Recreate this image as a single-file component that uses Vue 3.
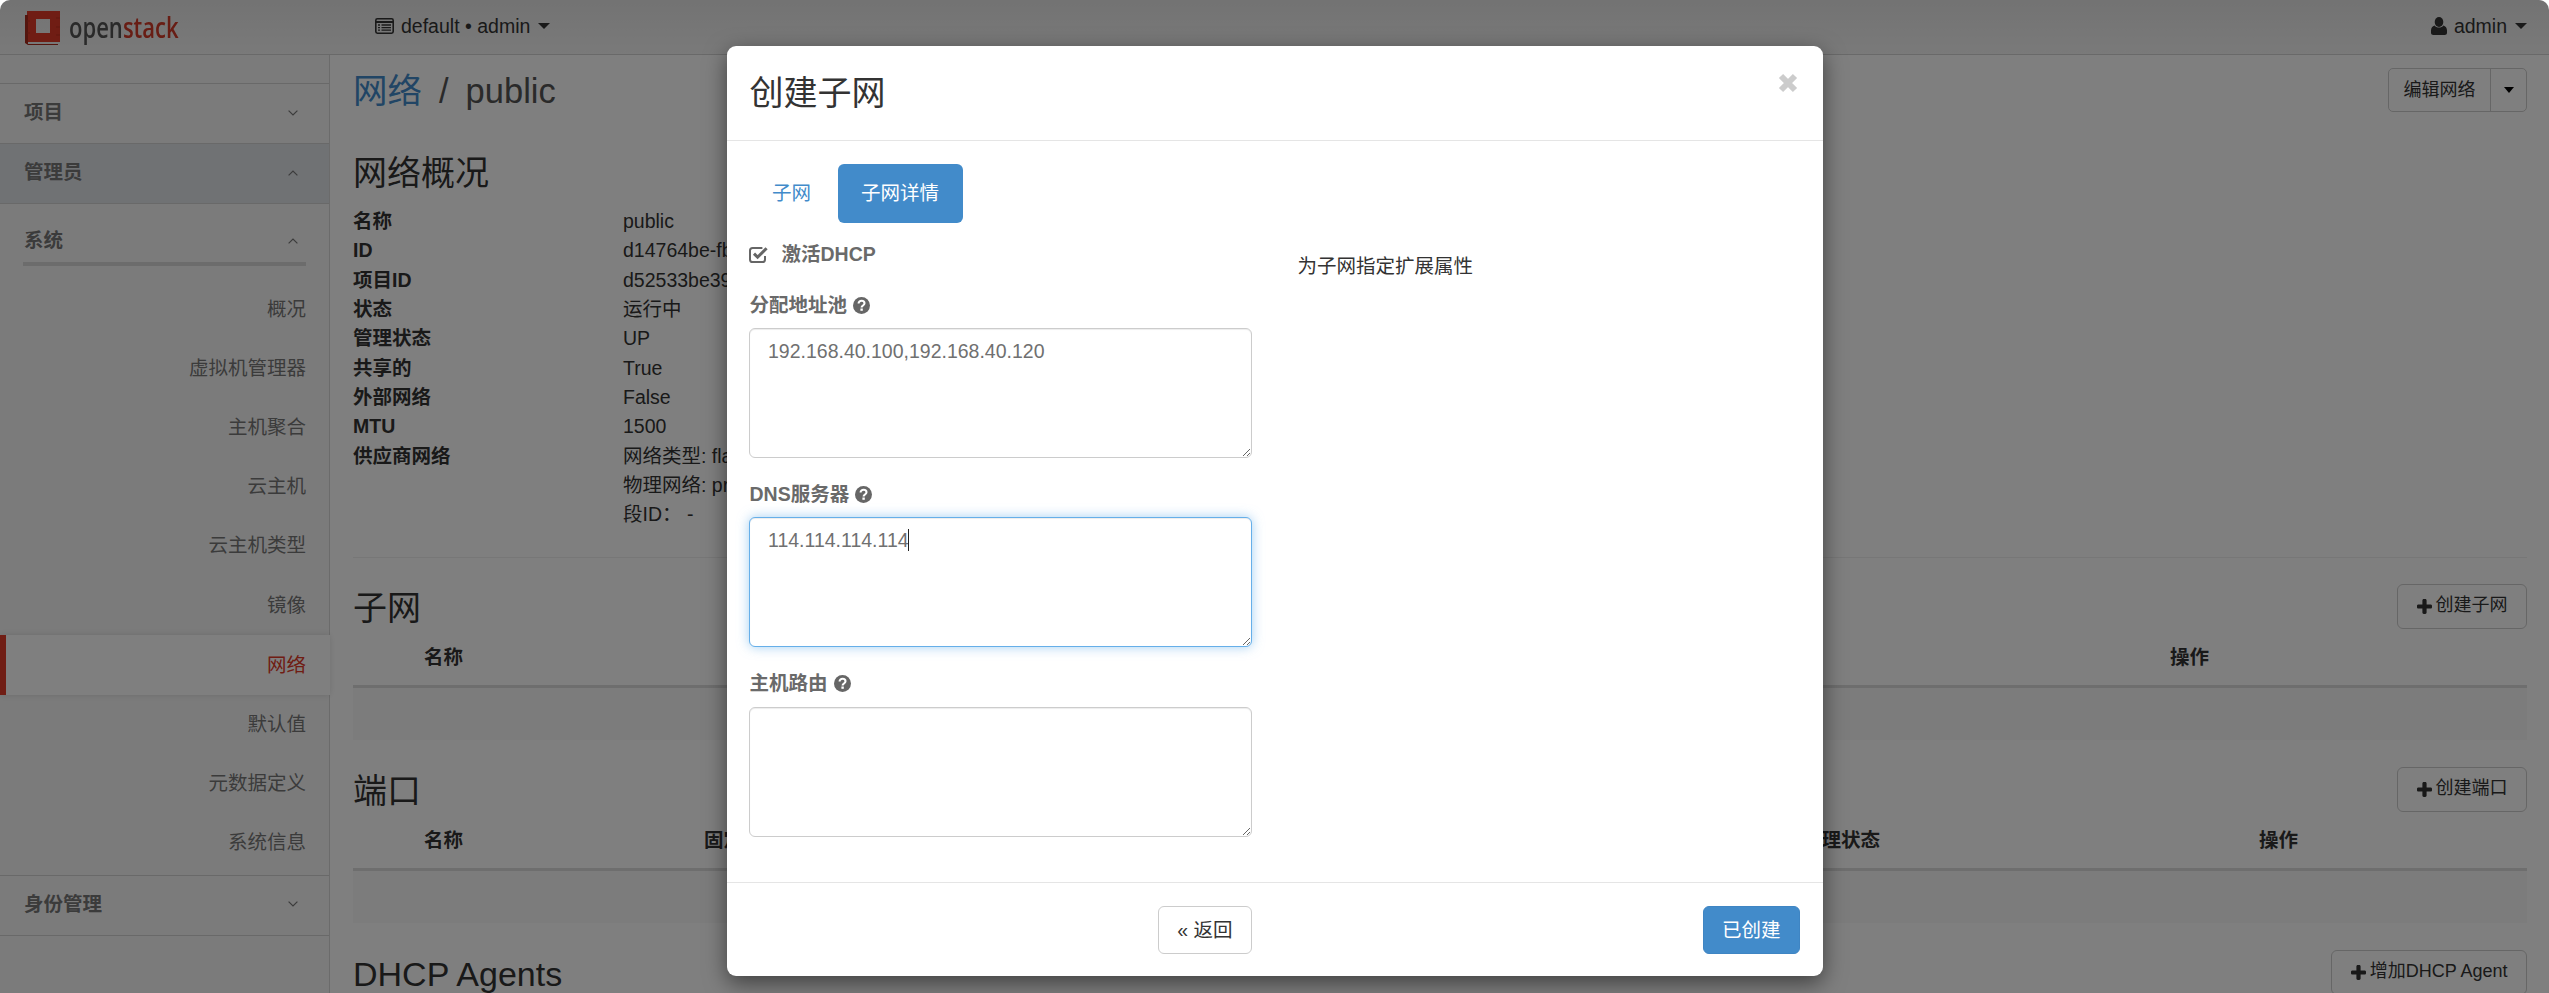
<template>
  <div class="page">
    <header class="topbar">
      <div class="brand">
        <svg class="brand-mark" width="36" height="36" viewBox="0 0 36 36">
          <path d="M2 2h33v31H2z M11 10v14h14V10z" fill="#e03a28" fill-rule="evenodd" />
          <path d="M0 6h3v29h30v1H3l-3-2z" fill="#a82a1c" />
          <path d="M2 12h3M2 24h3M31 9h4M31 18h4M31 26h4" stroke="#c0301c" stroke-width="1" />
        </svg>
        <span class="brand-name"><span class="brand-open">open</span><span class="brand-stack">stack</span></span>
      </div>
      <div class="scope">
        <svg width="19" height="16" viewBox="0 0 19 16" class="scope-icon">
          <rect x="0.8" y="0.8" width="17.4" height="14.4" rx="1.6" fill="none" stroke="#333" stroke-width="1.6" />
          <path d="M0.8 4h17.4" stroke="#333" stroke-width="2" />
          <path d="M3 7h2M3 9.6h2M3 12.2h2M6.5 7h9.5M6.5 9.6h9.5M6.5 12.2h9.5" stroke="#333" stroke-width="1.3" />
        </svg>
        <span>default • admin</span>
        <i class="caret"></i>
      </div>
      <div class="user">
        <svg width="16" height="18" viewBox="0 0 16 18" class="user-icon">
          <ellipse cx="8" cy="5" rx="4.3" ry="5" fill="#333" />
          <path d="M3.6 8.4C1.4 9 0 10.6 0 13.6v2.2C0 17.2 1 18 2.4 18h11.2c1.4 0 2.4-.8 2.4-2.2v-2.2c0-3-1.4-4.6-3.6-5.2-1 1.4-2.6 2.2-4.4 2.2s-3.400-.8-4.400-2.200z" fill="#333" />
        </svg>
        <span>admin</span>
        <i class="caret"></i>
      </div>
    </header>

    <div class="shell">
      <aside class="sidebar">
        <div class="nav-head">
          <span>项目</span>
          <svg class="chev" width="10" height="6" viewBox="0 0 10 6"><path d="M.6.6 5 5l4.400-4.400" /></svg>
        </div>
        <div class="nav-head nav-head-open">
          <span>管理员</span>
          <svg class="chev" width="10" height="6" viewBox="0 0 10 6"><path d="M.6 5.400 5 1l4.400 4.400" /></svg>
        </div>
        <div class="nav-sub">
          <span>系统</span>
          <svg class="chev" width="10" height="6" viewBox="0 0 10 6"><path d="M.6 5.400 5 1l4.400 4.400" /></svg>
        </div>
        <ul class="nav-list">
          <li v-for="item in navItems" :key="item" :class="{ active: item === '网络' }">{{ item }}</li>
        </ul>
        <div class="nav-head nav-head-last">
          <span>身份管理</span>
          <svg class="chev" width="10" height="6" viewBox="0 0 10 6"><path d="M.6.6 5 5l4.400-4.400" /></svg>
        </div>
      </aside>

      <main class="content">
        <div class="title-row">
          <h1><a>网络</a><span class="sep">/</span><span>public</span></h1>
          <div class="btn-group">
            <span class="btn-main">编辑网络</span>
            <span class="btn-drop"><i class="caret caret-dark"></i></span>
          </div>
        </div>

        <h3 class="overview-title">网络概况</h3>
        <dl class="details">
          <template v-for="row in details" :key="row.label + row.value">
            <dt>{{ row.label }}</dt>
            <dd>{{ row.value }}</dd>
          </template>
        </dl>
        <hr class="divider" />

        <section v-for="table in tables" :key="table.title" class="block">
          <div class="block-head">
            <h3>{{ table.title }}</h3>
            <span class="btn-add">
              <svg width="15" height="15" viewBox="0 0 15 15"><path d="M5.400 1.400C5.400.6 6 0 6.800 0h1.400c.8 0 1.400.6 1.400 1.400v4h4C14.400 5.400 15 6 15 6.800v1.400c0 .8-.6 1.400-1.400 1.400h-4v4c0 .8-.6 1.400-1.400 1.400H6.800c-.8 0-1.400-.6-1.400-1.400v-4h-4C.6 9.600 0 9 0 8.200V6.800c0-.8.6-1.400 1.400-1.400h4z" fill="#333" /></svg>
              {{ table.action }}
            </span>
          </div>
          <template v-if="table.columns">
            <div class="thead" :style="{ gridTemplateColumns: table.grid }">
              <span v-for="col in table.columns" :key="col">{{ col }}</span>
            </div>
            <div class="tbody"></div>
          </template>
        </section>
      </main>
    </div>

    <div class="backdrop">
      <div class="modal">
        <div class="modal-head">
          <h3>创建子网</h3>
          <svg class="close" width="20" height="20" viewBox="0 0 20 20"><path d="M3 3l14 14M17 3 3 17" /></svg>
        </div>
        <div class="modal-body">
          <div class="tabs">
            <span class="tab">子网</span>
            <span class="tab tab-active">子网详情</span>
          </div>
          <div class="columns">
            <form class="form" @submit.prevent>
              <div class="check">
                <svg width="19" height="17" viewBox="0 0 19 17">
                  <path d="M16 10v3.400a2.600 2.600 0 0 1-2.600 2.600H3.600A2.600 2.600 0 0 1 1 13.400V4.600A2.600 2.600 0 0 1 3.600 2h9.800" fill="none" stroke="#666" stroke-width="2" />
                  <path d="M5 7.600 8.600 11.200 17.600 2.200" fill="none" stroke="#666" stroke-width="3" />
                </svg>
                <span>激活DHCP</span>
              </div>
              <div v-for="field in fields" :key="field.label" class="field">
                <label>
                  {{ field.label }}
                  <svg width="17" height="17" viewBox="0 0 17 17">
                    <circle cx="8.500" cy="8.500" r="8.500" fill="#666" />
                    <path d="M5.600 6.500c0-1.700 1.300-2.700 3-2.700s2.900 1 2.900 2.500c0 2.200-2.900 2.200-2.900 4.200" fill="none" stroke="#fff" stroke-width="2.100" />
                    <rect x="7.400" y="11.500" width="2.400" height="2.300" fill="#fff" />
                  </svg>
                </label>
                <div class="area-wrap">
                  <textarea :class="{ focused: field.focused }" :value="field.value" readonly tabindex="-1"></textarea>
                  <i v-if="field.focused" class="text-caret"></i>
                </div>
              </div>
            </form>
            <p class="hint">为子网指定扩展属性</p>
          </div>
        </div>
        <div class="modal-foot">
          <div class="foot-left"><span class="btn-back">« 返回</span></div>
          <span class="btn-primary">已创建</span>
        </div>
      </div>
    </div>
  </div>
</template>

<script setup>
const navItems = ['概况', '虚拟机管理器', '主机聚合', '云主机', '云主机类型', '镜像', '网络', '默认值', '元数据定义', '系统信息']

// 后面几个值被弹窗盖住，只保留露出来的部分
const details = [
  { label: '名称', value: 'public' },
  { label: 'ID', value: 'd14764be-fb' },
  { label: '项目ID', value: 'd52533be39' },
  { label: '状态', value: '运行中' },
  { label: '管理状态', value: 'UP' },
  { label: '共享的', value: 'True' },
  { label: '外部网络', value: 'False' },
  { label: 'MTU', value: '1500' },
  { label: '供应商网络', value: '网络类型: flat' },
  { label: '', value: '物理网络: pr' },
  { label: '', value: '段ID： -' }
]

const tables = [
  {
    title: '子网',
    action: '创建子网',
    grid: '71px 1746px 1fr',
    columns: ['', '名称', '操作']
  },
  {
    title: '端口',
    action: '创建端口',
    grid: '71px 280px 1098px 457px 1fr',
    columns: ['', '名称', '固定IP', '管理状态', '操作']
  },
  { title: 'DHCP Agents', action: '增加DHCP Agent' }
]

const fields = [
  { label: '分配地址池', value: '192.168.40.100,192.168.40.120' },
  { label: 'DNS服务器', value: '114.114.114.114', focused: true },
  { label: '主机路由', value: '' }
]
</script>

<style>
html,
body {
  margin: 0;
  background: #fff;
  overflow: hidden;
}
</style>

<style scoped>
.page {
  position: relative;
  display: flex;
  flex-direction: column;
  width: 2549px;
  height: 993px;
  overflow: hidden;
  border-radius: 10px 10px 0 0;
  background: #fff;
  color: #333;
  font-family: "Liberation Sans", "Noto Sans CJK SC", sans-serif;
  font-size: 19.5px;
  line-height: 29.33px;
}

.topbar {
  display: flex;
  align-items: center;
  flex: none;
  box-sizing: border-box;
  height: 55px;
  padding: 0 22px 1px 25px;
  border-bottom: 1px solid #d2d2d2;
  background: linear-gradient(#e6e6e6, #f4f4f4);
}

.brand {
  display: flex;
  align-items: center;
  width: 350px;
}

.brand-mark {
  flex: none;
}

.brand-name {
  margin-left: 8px;
  font-family: "Open Sans", sans-serif;
  font-size: 29px;
  font-weight: 600;
  line-height: 36px;
  transform: scaleX(0.76);
  transform-origin: left center;
  filter: blur(0.4px);
}

.brand-open {
  color: #555;
}

.brand-stack {
  color: #d03a28;
}

.scope {
  display: flex;
  align-items: center;
}

.scope-icon {
  margin-right: 7px;
}

.user {
  display: flex;
  align-items: center;
  margin-left: auto;
}

.user-icon {
  margin-right: 7px;
}

.caret {
  display: inline-block;
  width: 0;
  height: 0;
  margin-left: 8px;
  border-top: 6px solid #333;
  border-left: 6px solid transparent;
  border-right: 6px solid transparent;
}

.shell {
  display: flex;
  flex: 1;
  min-height: 0;
}

.sidebar {
  flex: none;
  box-sizing: border-box;
  width: 330px;
  padding-top: 28px;
  border-right: 1px solid #d6d6d6;
  background: #f6f6f6;
  color: #777;
}

.nav-head {
  display: flex;
  align-items: center;
  justify-content: space-between;
  box-sizing: border-box;
  height: 60px;
  padding: 0 31px 2px 24px;
  border-top: 1px solid #d2d2d2;
  font-weight: bold;
}

.nav-head-open {
  background: #e0e4e9;
}

.nav-head-last {
  border-bottom: 1px solid #d2d2d2;
  height: 61px;
}

.nav-sub {
  position: relative;
  display: flex;
  align-items: center;
  justify-content: space-between;
  box-sizing: border-box;
  height: 63px;
  padding: 13px 31px 2px 24px;
  border-top: 1px solid #d2d2d2;
  font-weight: bold;
}

.nav-sub::after {
  content: "";
  position: absolute;
  left: 23px;
  right: 23px;
  bottom: 0;
  height: 4px;
  background: #d8d8d8;
}

.chev {
  fill: none;
  stroke: #777;
  stroke-width: 1.200;
}

.nav-list {
  margin: 14px 0 0;
  padding: 0 0 3px;
  list-style: none;
}

.nav-list li {
  box-sizing: border-box;
  height: 59.120px;
  padding: 15px 23px 0 0;
  text-align: right;
}

.nav-list li.active {
  position: relative;
  width: 330px;
  height: 60px;
  padding-top: 16px;
  padding-right: 24px;
  border-left: 6px solid #e03a28;
  background: #fff;
  color: #e03a28;
  box-shadow: 0 0 6px rgba(0, 0, 0, 0.12);
}

.content {
  flex: 1;
  min-width: 0;
  padding: 13px 22px 0 23px;
}

.title-row {
  display: flex;
  align-items: center;
  justify-content: space-between;
  height: 44px;
}

h1 {
  margin: 0;
  padding-top: 1px;
  font-size: 34.5px;
  font-weight: normal;
  line-height: 50px;
  color: #555;
}

h1 a {
  color: #428bca;
}

.sep {
  margin: 0 17px;
}

h3 {
  margin: 0;
  font-size: 34px;
  font-weight: normal;
  line-height: 40px;
  color: #333;
}

.btn-group {
  display: flex;
  height: 44px;
  box-sizing: border-box;
  border: 1px solid #ccc;
  border-radius: 5px;
  font-size: 18px;
  line-height: 42px;
}

.btn-main {
  padding: 0 14.500px;
  border-right: 1px solid #ccc;
}

.btn-drop {
  display: flex;
  align-items: center;
  justify-content: center;
  width: 35px;
}

.caret-dark {
  margin: 0;
  border-top-width: 6px;
  border-left-width: 5.500px;
  border-right-width: 5.500px;
  border-top-color: #000;
}

.overview-title {
  margin: 41px 0 14px;
}

.details {
  display: grid;
  grid-template-columns: 270px 1fr;
  margin: 0;
}

.details dt {
  height: 29.330px;
  font-weight: bold;
}

.details dd {
  height: 29.330px;
  margin: 0;
  white-space: nowrap;
}

.divider {
  margin: 27px 0 26px;
  border: 0;
  border-top: 1px solid #eee;
}

.block {
  margin-bottom: 27px;
}

.block-head {
  display: flex;
  align-items: center;
  justify-content: space-between;
  height: 45px;
}

.block-head h3 {
  padding-top: 3px;
}

.btn-add {
  display: inline-flex;
  align-items: center;
  gap: 4px;
  box-sizing: border-box;
  height: 45px;
  padding: 0 18.500px;
  border: 1px solid #ccc;
  border-radius: 6px;
  font-size: 18px;
  white-space: nowrap;
}

.thead {
  display: grid;
  align-items: center;
  box-sizing: border-box;
  height: 59px;
  padding-top: 3px;
  border-bottom: 3px solid #ddd;
  font-weight: bold;
}

.tbody {
  height: 52px;
  background: #f9f9f9;
}

.backdrop {
  position: absolute;
  inset: 0;
  display: flex;
  justify-content: center;
  box-sizing: border-box;
  padding-top: 46px;
  background: rgba(0, 0, 0, 0.5);
}

.modal {
  display: flex;
  flex-direction: column;
  box-sizing: border-box;
  width: 1096px;
  height: 930px;
  border-radius: 9px;
  background: #fff;
  box-shadow: 0 7px 22px rgba(0, 0, 0, 0.5);
}

.modal-head {
  position: relative;
  display: flex;
  align-items: center;
  flex: none;
  box-sizing: border-box;
  height: 95px;
  padding-left: 23px;
  border-bottom: 1px solid #e5e5e5;
}

.close {
  position: absolute;
  top: 27px;
  right: 25px;
  fill: none;
  stroke: #ccc;
  stroke-width: 6;
}

.modal-body {
  flex: 1;
  padding: 23px 22px 0;
}

.tabs {
  display: flex;
  gap: 3px;
}

.tab {
  padding: 15px 23.500px;
  border-radius: 6px;
  color: #428bca;
}

.tab-active {
  background: #428bca;
  color: #fff;
}

.columns {
  display: grid;
  grid-template-columns: 503px 1fr;
  column-gap: 46px;
  margin-top: 17px;
}

.check {
  display: flex;
  align-items: center;
  gap: 14px;
  margin-bottom: 21px;
  color: #6a6a6a;
  font-weight: bold;
}

.field {
  margin-bottom: 22px;
}

.field label {
  display: flex;
  align-items: center;
  gap: 6px;
  margin-bottom: 8px;
  padding-left: 1px;
  color: #6a6a6a;
  font-weight: bold;
}

.area-wrap {
  position: relative;
  height: 130px;
}

textarea {
  display: block;
  box-sizing: border-box;
  width: 503px;
  height: 130px;
  padding: 8px 18.500px;
  border: 1px solid #ccc;
  border-radius: 6px;
  outline: none;
  color: #707070;
  font: inherit;
  line-height: 29.330px;
  resize: vertical;
  box-shadow: inset 0 1px 1px rgba(0, 0, 0, 0.075);
}

textarea.focused {
  border-color: #66afe9;
  box-shadow: inset 0 1px 1px rgba(0, 0, 0, 0.075), 0 0 12px rgba(102, 175, 233, 0.6);
}

.text-caret {
  position: absolute;
  top: 12px;
  left: 159px;
  width: 1.500px;
  height: 22px;
  background: #222;
}

.hint {
  margin: 12px 0 0;
}

.modal-foot {
  display: flex;
  align-items: center;
  flex: none;
  box-sizing: border-box;
  height: 94px;
  padding: 0 23px 0 22px;
  border-top: 1px solid #e5e5e5;
}

.foot-left {
  display: flex;
  justify-content: flex-end;
  width: 503px;
}

.btn-back {
  box-sizing: border-box;
  height: 48px;
  padding: 0 18px;
  border: 1px solid #ccc;
  border-radius: 6px;
  line-height: 46px;
}

.btn-primary {
  box-sizing: border-box;
  height: 48px;
  margin-left: auto;
  padding: 0 18px;
  border: 1px solid #3f85c3;
  border-radius: 6px;
  background: #428bca;
  color: #fff;
  line-height: 46px;
}
</style>
